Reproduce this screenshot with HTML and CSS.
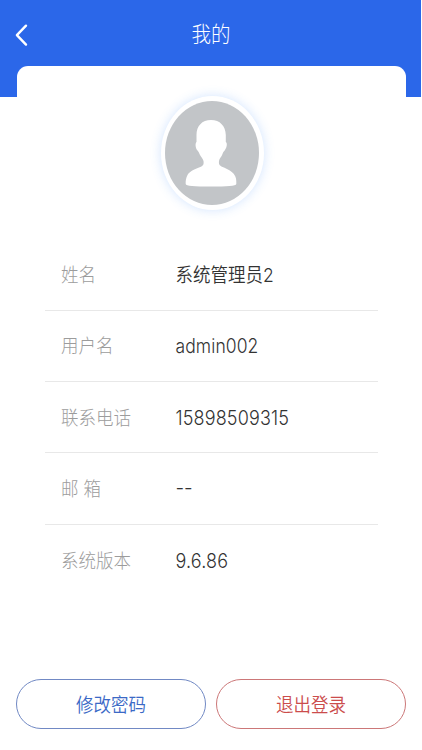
FILE: index.html
```html
<!DOCTYPE html>
<html lang="zh-CN">
<head>
    <meta charset="UTF-8">
    <meta name="viewport" content="width=device-width, initial-scale=1">
    <title>我的</title>
    <link rel="stylesheet" href="styles.css">
</head>
<body>
    <header class="header">
        <a class="back" href="#" aria-label="返回">
            <svg width="14" height="24" viewBox="0 0 14 24">
                <path d="M11 2.7 L1.900 12.1 L11 21.6" />
            </svg>
        </a>
        <h1 class="title"><span class="text">我的</span></h1>
    </header>

    <main class="card">
        <div class="avatar">
            <svg width="94" height="104" viewBox="0 0 94 104">
                <path d="M46 19 C37 19 31.5 25 31.5 34 L31.5 41 C30 42 30.5 47 32 49 C33 50 34 51 34.5 53 C36 56 37.5 57 38.5 60 C39 64 38 65 34 66.500 C29 68.500 25 70 22.500 74 C21 77 20.500 80 20.700 83 C21 85 29 85.500 46 85.500 C62 85.500 71 85 71.300 83 C71.500 79 71 76 69.500 74 C67 70 63 68.500 59 66.500 C55 65 53.500 64 54 60 C54.500 57 56.500 56 57.500 53 C58 51 59 50.500 60 49 C62 46 62.500 42 60.800 41 L60.800 34 C60.500 25 55 19 46 19 Z" />
            </svg>
        </div>

        <ul class="info">
            <li>
                <span class="label text">姓名</span>
                <span class="value text">系统管理员2</span>
            </li>
            <li>
                <span class="label text">用户名</span>
                <span class="value text latin">admin002</span>
            </li>
            <li>
                <span class="label text">联系电话</span>
                <span class="value text number">15898509315</span>
            </li>
            <li>
                <span class="label text">邮 箱</span>
                <span class="value text empty">--</span>
            </li>
            <li>
                <span class="label text">系统版本</span>
                <span class="value text number">9.6.86</span>
            </li>
        </ul>
    </main>

    <footer class="actions">
        <button class="btn btn-blue"><span class="text">修改密码</span></button>
        <button class="btn btn-red"><span class="text">退出登录</span></button>
    </footer>
</body>
</html>
```

FILE: styles.css
```css
:root {
    --blue: #2b67e9;
    --label: #9c9c9c;
    --text: #333333;
    --line: #e8e8e8;
}

* {
    margin: 0;
    padding: 0;
    box-sizing: border-box;
}

body {
    height: 750px;
    background: #ffffff;
    color: var(--text);
    font-family: Inter, "Noto Sans CJK SC", sans-serif;
    font-size: 17.5px;
    font-weight: 350;
    display: flex;
    flex-direction: column;
    overflow: hidden;
}

/* slightly tall letters */
.text {
    display: inline-block;
    transform: scaleY(1.08);
}

.header {
    height: 97px;
    flex: none;
    margin-right: 1px;
    padding: 22px 15px 0;
    background: var(--blue);
    display: flex;
    align-items: flex-start;
}

.back {
    width: 14px;
    height: 24px;
    margin-top: 1px;
}

.back svg {
    display: block;
    fill: none;
    stroke: #ffffff;
    stroke-width: 2.4;
    stroke-linecap: round;
    stroke-linejoin: round;
}

.title {
    flex: 1;
    margin-right: 13px;
    line-height: 24px;
    text-align: center;
    color: #ffffff;
    font-size: 19.5px;
    font-weight: 300;
}

.card {
    flex: 1;
    margin: -31px 16px 0 16.5px;
    padding: 30px 28px 0;
    background: #ffffff;
    border-radius: 11px 11px 0 0;
}

.avatar {
    width: 103px;
    height: 114px;
    margin: 0 auto 0 116px;
    padding: 5px 4.5px;
    background: #ffffff;
    border-radius: 50%;
    box-shadow: 0 0 11px rgba(60, 140, 250, 0.23);
}

.avatar svg {
    display: block;
    background: #c2c5c8;
    border-radius: 50%;
    fill: #ffffff;
}

.info {
    margin-top: 29.5px;
    list-style: none;
}

.info li {
    height: 71.3px;
    padding: 0 0 2px 16.5px;
    border-bottom: 1px solid var(--line);
    display: flex;
    align-items: center;
}

.info li:last-child {
    border-bottom: none;
}

.label {
    width: 114.5px;
    color: var(--label);
    font-weight: 300;
}

.latin,
.number {
    padding-top: 2px;
    transform: scaleY(1.13);
}

.latin {
    letter-spacing: 0.1px;
}

.number {
    font-size: 18px;
    letter-spacing: 0.15px;
}

.empty {
    font-size: 19px;
    font-weight: 350;
}

.actions {
    flex: none;
    padding: 0 16px 21px;
    display: flex;
    gap: 10px;
}

.btn {
    flex: 1;
    height: 50px;
    padding-bottom: 2px;
    background: #ffffff;
    border: 1px solid;
    border-radius: 25px;
    font: inherit;
}

.btn-blue {
    color: #3b69c6;
    border-color: #7189c4;
}

.btn-red {
    color: #cb4c4c;
    border-color: #cc7778;
}
```
